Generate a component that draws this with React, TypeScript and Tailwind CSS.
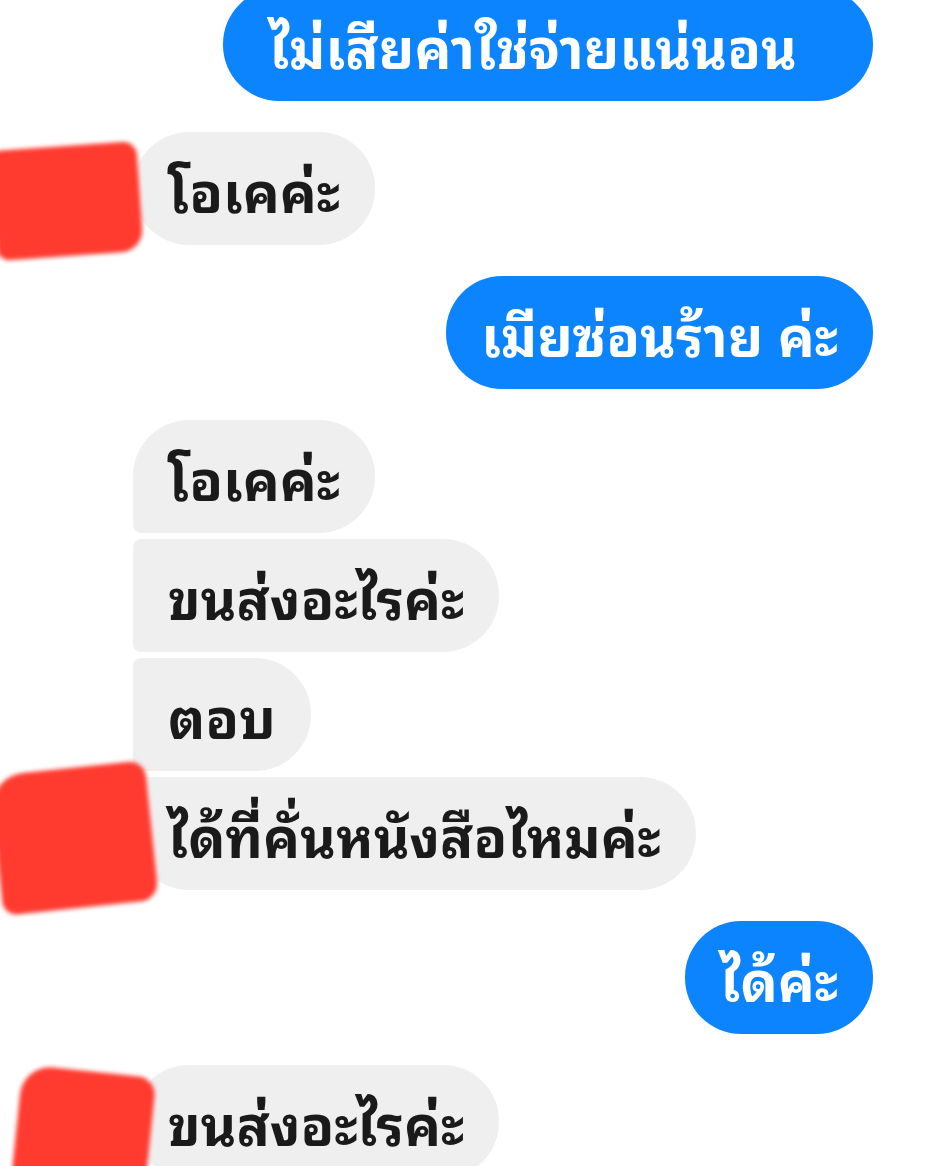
import React from "react";

type Msg = {
  text: string;
  mine: boolean;
  shape: string;
  gap: string;
  pad?: string;
  avatar?: string;
};

const messages: Msg[] = [
  { text: "ไม่เสียค่าใช่จ่ายแน่นอน", mine: true, shape: "rounded-[56px]", gap: "mt-[-12px]", pad: "pl-[46px] pr-[76px]" },
  { text: "โอเคค่ะ", mine: false, shape: "rounded-[56px]", gap: "mt-[31px]", avatar: "a" },
  { text: "เมียซ่อนร้าย ค่ะ", mine: true, shape: "rounded-[56px]", gap: "mt-[31px]" },
  { text: "โอเคค่ะ", mine: false, shape: "rounded-r-[56px] rounded-tl-[56px] rounded-bl-[8px]", gap: "mt-[31px]" },
  { text: "ขนส่งอะไรค่ะ", mine: false, shape: "rounded-r-[56px] rounded-l-[8px]", gap: "mt-[6px]" },
  { text: "ตอบ", mine: false, shape: "rounded-r-[56px] rounded-l-[8px]", gap: "mt-[6px]" },
  { text: "ได้ที่คั่นหนังสือไหมค่ะ", mine: false, shape: "rounded-r-[56px] rounded-tl-[8px] rounded-bl-[56px]", gap: "mt-[6px]", avatar: "b" },
  { text: "ได้ค่ะ", mine: true, shape: "rounded-[56px]", gap: "mt-[31px]" },
  { text: "ขนส่งอะไรค่ะ", mine: false, shape: "rounded-[56px]", gap: "mt-[31px]", avatar: "c" },
];

// red scribbles hiding the avatars
const blots: Record<string, string> = {
  a: "ml-[-6px] h-[110px] w-[146px] translate-y-[12px] rotate-[-4deg] rounded-[10px_14px_22px_12px]",
  b: "ml-[-4px] h-[140px] w-[156px] translate-y-[4px] rotate-[-6deg] rounded-[34px_16px_18px_14px]",
  c: "ml-[16px] h-[130px] w-[134px] translate-y-[14px] rotate-[6deg] rounded-[30px_18px_18px_10px]",
};

export default function App() {
  return (
    <div
      className="h-[1166px] w-[932px] overflow-hidden bg-white"
      style={{ fontFamily: '"Noto Sans Thai Looped", "Noto Sans Thai", "Noto Sans", sans-serif' }}
    >
      <div className="flex flex-col">
        {messages.map((m, i) => (
          <div key={i} className={`flex items-center ${m.gap} ${m.mine ? "justify-end pr-[59px]" : "justify-start"}`}>
            {!m.mine && (
              <div className="flex h-[113px] w-[133px] shrink-0 items-center">
                {m.avatar && <div className={`z-10 shrink-0 bg-[#ff3b30] blur-[2px] ${blots[m.avatar]}`} />}
              </div>
            )}
            <div
              className={`flex h-[113px] items-center whitespace-nowrap text-[55px] font-bold leading-none ${m.pad ?? "px-[35px]"} ${m.shape} ${
                m.mine ? "bg-[#0b84fe] text-white" : "bg-[#efefef] text-[#1a1a1a]"
              }`}
            >
              {m.text}
            </div>
          </div>
        ))}
      </div>
    </div>
  );
}
